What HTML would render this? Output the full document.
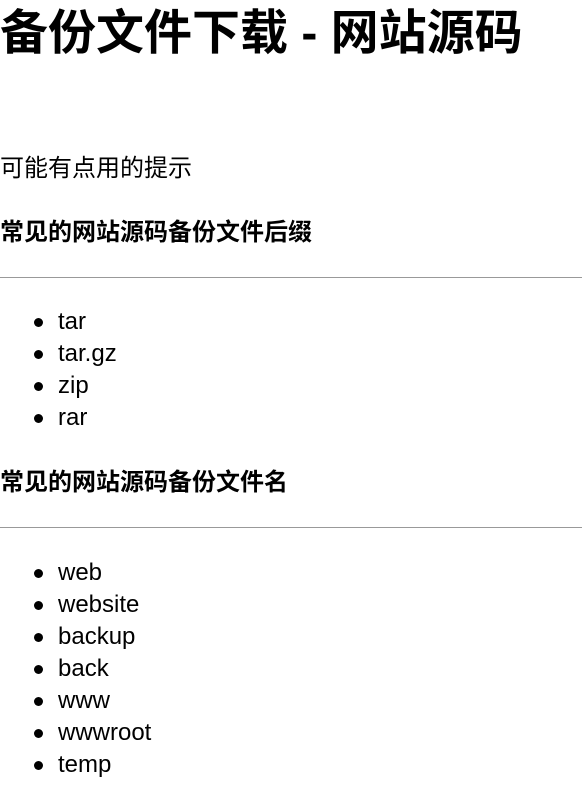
<!DOCTYPE html>
<html><head><meta charset="utf-8"><style>
body{margin:0;background:#fff;color:#000;font-family:"Liberation Sans","Noto Sans CJK SC",sans-serif;width:582px;height:789px;position:relative;overflow:hidden}
.a{position:absolute;left:0;white-space:nowrap;line-height:32px;font-size:24px}
h1.a{font-size:48px;line-height:64px;margin:0;font-weight:bold}
.b{font-weight:bold}
.hr{position:absolute;left:0;width:582px;height:0;border-top:1px solid #999}
.li{position:absolute;left:58px;font-size:24px;line-height:32px}
.li:before{content:"";position:absolute;left:-24px;top:12px;width:9px;height:9px;border-radius:50%;background:#000}
</style></head><body>
<h1 class="a" style="top:2px">备份文件下载 - 网站源码</h1>
<div class="a" style="top:153px">可能有点用的提示</div>
<div class="a b" style="top:217px">常见的网站源码备份文件后缀</div>
<div class="hr" style="top:277px"></div>
<div class="li" style="top:306px">tar</div>
<div class="li" style="top:338px">tar.gz</div>
<div class="li" style="top:370px">zip</div>
<div class="li" style="top:402px">rar</div>
<div class="a b" style="top:467px">常见的网站源码备份文件名</div>
<div class="hr" style="top:527px"></div>
<div class="li" style="top:557px">web</div>
<div class="li" style="top:589px">website</div>
<div class="li" style="top:621px">backup</div>
<div class="li" style="top:653px">back</div>
<div class="li" style="top:685px">www</div>
<div class="li" style="top:717px">wwwroot</div>
<div class="li" style="top:749px">temp</div>
</body></html>
